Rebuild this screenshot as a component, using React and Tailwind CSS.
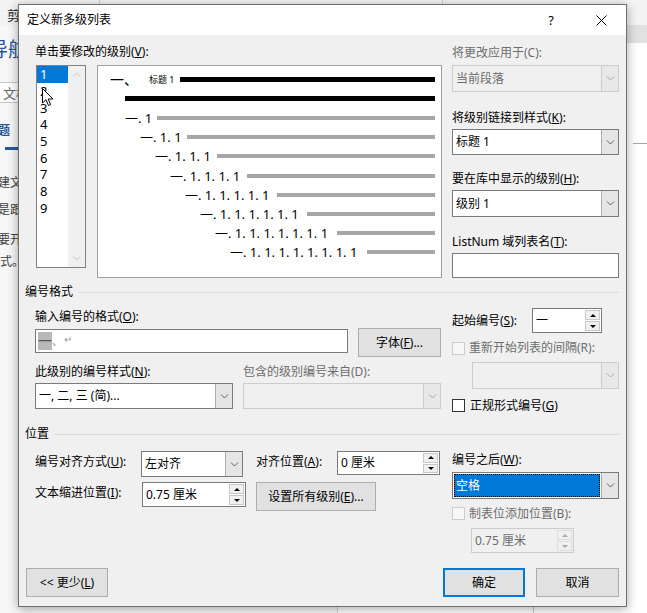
import React from "react";

const FONT = "font-['Noto_Sans','Noto_Sans_CJK_SC',sans-serif]";

function Chevron({ color = "#606060" }) {
  return (
    <svg width="9" height="5" viewBox="0 0 9 5">
      <path d="M1 0.5 L4.5 4 L8 0.5" fill="none" stroke={color} strokeWidth="1" />
    </svg>
  );
}

function Tri({ up, color = "#000" }) {
  return (
    <svg width="6" height="3" viewBox="0 0 6 3">
      <path d={up ? "M0 3 L3 0 L6 3 Z" : "M0 0 L3 3 L6 0 Z"} fill={color} />
    </svg>
  );
}

function Combo({ className = "", disabled = false, field = "pl-[3px]", children }) {
  return (
    <div
      className={`flex border ${
        disabled ? "border-[#cccccc] bg-[#f0f0f0] text-[#6d6d6d]" : "border-[#7a7a7a] bg-white"
      } ${className}`}
    >
      <div className={`flex-1 min-w-0 flex items-center whitespace-nowrap overflow-hidden ${field}`}>
        {children}
      </div>
      <div
        className={`w-[17px] flex items-center justify-center border-l ${
          disabled ? "border-[#cccccc] bg-[#e8e8e8]" : "border-[#adadad] bg-[#e5e5e5]"
        }`}
      >
        <Chevron color={disabled ? "#a8a8a8" : "#606060"} />
      </div>
    </div>
  );
}

function Spin({ className = "", disabled = false, children }) {
  return (
    <div
      className={`flex border ${
        disabled ? "border-[#cccccc] bg-[#f0f0f0] text-[#6d6d6d]" : "border-[#7a7a7a] bg-white"
      } ${className}`}
    >
      <div className="flex-1 flex items-center pl-[3px] whitespace-nowrap">{children}</div>
      <div className="w-[17px] flex flex-col p-[1px] gap-[1px]">
        <div
          className={`flex-1 flex items-center justify-center border ${
            disabled ? "border-[#dddddd] bg-[#f0f0f0]" : "border-[#c8c8c8] bg-[#f0f0f0]"
          }`}
        >
          <Tri up color={disabled ? "#a8a8a8" : "#000"} />
        </div>
        <div
          className={`flex-1 flex items-center justify-center border ${
            disabled ? "border-[#dddddd] bg-[#f0f0f0]" : "border-[#c8c8c8] bg-[#f0f0f0]"
          }`}
        >
          <Tri color={disabled ? "#a8a8a8" : "#000"} />
        </div>
      </div>
    </div>
  );
}

function Btn({ className = "", primary = false, children }) {
  return (
    <div
      className={`flex items-center justify-center bg-[#e1e1e1] border ${
        primary ? "border-[#0078d7] shadow-[inset_0_0_0_1px_#0078d7]" : "border-[#adadad]"
      } ${className}`}
    >
      {children}
    </div>
  );
}

function Check({ disabled = false }) {
  return (
    <div
      className={`w-[13px] h-[13px] shrink-0 border ${
        disabled ? "border-[#cccccc] bg-[#f7f7f7]" : "border-[#333333] bg-white"
      }`}
    />
  );
}

function SectionHeader({ className = "", children }) {
  return (
    <div className={`flex items-center ${className}`}>
      <span>{children}</span>
      <div className="flex-1 h-px ml-[6px] bg-[#dcdcdc]" />
    </div>
  );
}

const previewRows = [
  { pad: "ml-[27px]", box: "w-[32px]", text: "一. 1" },
  { pad: "ml-[42px]", box: "w-[47px]", text: "一. 1. 1" },
  { pad: "ml-[57px]", box: "w-[62px]", text: "一. 1. 1. 1" },
  { pad: "ml-[72px]", box: "w-[77px]", text: "一. 1. 1. 1. 1" },
  { pad: "ml-[87px]", box: "w-[92px]", text: "一. 1. 1. 1. 1. 1" },
  { pad: "ml-[102px]", box: "w-[107px]", text: "一. 1. 1. 1. 1. 1. 1" },
  { pad: "ml-[117px]", box: "w-[122px]", text: "一. 1. 1. 1. 1. 1. 1. 1" },
  { pad: "ml-[132px]", box: "w-[137px]", text: "一. 1. 1. 1. 1. 1. 1. 1. 1" },
];

const levels = ["1", "2", "3", "4", "5", "6", "7", "8", "9"];

function WordBackdrop() {
  return (
    <div className="flex flex-col h-full">
      <div className="h-[25px] shrink-0 flex items-start bg-[#f3f3f3]">
        <span className="ml-[7px] mt-[7px] text-[13px] text-[#262626]">剪</span>
        <div className="ml-[79px] w-px h-[5px] bg-[#d0d0d0]" />
        <div className="ml-[342px] w-px h-[5px] bg-[#d0d0d0]" />
      </div>
      <div className="flex flex-1 min-h-0">
        <div className="w-[338px] shrink-0 flex flex-col bg-[#f7f7f7] border-r border-[#d4d4d4] overflow-hidden">
          <div className="ml-[-12px] mt-[13px] text-[20px] leading-[24px] text-[#2b579a]">导航</div>
          <div className="ml-[-20px] mr-[12px] mt-[20px] h-[21px] flex items-center pl-[22px] bg-white border border-[#c6c6c6] text-[13px] text-[#666666]">
            文档
          </div>
          <div className="ml-[-14px] mt-[20px] font-bold text-[#2b579a]">标题</div>
          <div className="ml-[5px] mt-[8px] w-[32px] h-[3px] bg-[#2b579a]" />
          <div className="ml-[-2px] mt-[25px] text-[#404040]">建文</div>
          <div className="ml-[-2px] mt-[11px] text-[#404040]">是跟</div>
          <div className="ml-[-2px] mt-[14px] text-[#404040]">要开</div>
          <div className="ml-[0px] mt-[6px] text-[#404040]">式。</div>
        </div>
        <div className="flex-1 flex flex-col bg-white">
          <div className="h-[18px] bg-[#e1e1e1]" />
          <div className="ml-[295px] mt-[100px] h-px bg-[#a6a6a6]" />
          <div className="mt-auto h-[7px] flex">
            <div className="ml-[195px] w-px bg-[#c8c8c8]" />
          </div>
        </div>
      </div>
    </div>
  );
}

function LevelList() {
  return (
    <div className="ml-[1px] w-[50px] h-[203px] flex border border-[#828282] bg-white">
      <div className="flex-1 flex flex-col">
        {levels.map((lv) => (
          <div
            key={lv}
            className={`h-[16.7px] flex items-center pl-[3px] text-[13px] ${
              lv === "1" ? "bg-[#0078d7] text-white" : "text-black"
            }`}
          >
            {lv}
          </div>
        ))}
      </div>
      <div className="w-[17px] flex flex-col justify-between bg-[#f0f0f0]">
        <div className="h-[17px] flex items-center justify-center">
          <svg width="9" height="5" viewBox="0 0 9 5">
            <path d="M1 4.5 L4.5 1 L8 4.5" fill="none" stroke="#c2c2c2" strokeWidth="1" />
          </svg>
        </div>
        <div className="h-[17px] flex items-center justify-center">
          <Chevron color="#c2c2c2" />
        </div>
      </div>
    </div>
  );
}

function Preview() {
  return (
    <div className="ml-[11px] w-[345px] h-[213px] flex flex-col pt-[4px] border border-[#a0a0a0] bg-white">
      <div className="h-[19.2px] flex items-center">
        <span className="ml-[12px] w-[39px] text-[14px]">一、</span>
        <span className="w-[31px] text-[9px] whitespace-nowrap">标题 1</span>
        <div className="flex-1 h-[5px] mr-[6px] bg-black" />
      </div>
      <div className="h-[19.2px] flex items-center">
        <div className="flex-1 h-[5px] ml-[27px] mr-[6px] bg-black" />
      </div>
      {previewRows.map((row) => (
        <div key={row.text} className="h-[19.2px] flex items-center">
          <span className={`${row.pad} ${row.box} text-[13px] whitespace-pre`}>{row.text}</span>
          <div className="flex-1 h-[4px] mr-[6px] bg-[#a6a6a6]" />
        </div>
      ))}
    </div>
  );
}

function Dialog() {
  return (
    <div className="absolute left-[18px] top-[4px] w-[609px] h-[603px] flex flex-col border border-[#707070] bg-[#f0f0f0] shadow-[0_2px_10px_rgba(0,0,0,0.35)]">
      {/* 标题栏 */}
      <div className="h-[30px] shrink-0 flex items-center bg-white">
        <span className="ml-[8px]">定义新多级列表</span>
        <div className="ml-auto w-[50px] h-full flex items-center justify-center text-[13px]">?</div>
        <div className="w-[50px] h-full flex items-center justify-center">
          <svg width="11" height="11" viewBox="0 0 11 11">
            <path d="M0.5 0.5 L10.5 10.5 M10.5 0.5 L0.5 10.5" stroke="#000" strokeWidth="1" />
          </svg>
        </div>
      </div>

      <div className="flex-1 flex flex-col pl-[6px] pr-[7px]">
        {/* 级别 + 预览 */}
        <div className="flex pl-[10px] pt-[9px]">
          <div className="w-[407px] flex flex-col">
            <div>
              单击要修改的级别(<u>V</u>):
            </div>
            <div className="flex items-start mt-[5px]">
              <LevelList />
              <Preview />
            </div>
          </div>
          <div className="w-[167px] ml-[10px] flex flex-col">
            <div className="mt-[1px] text-[#6d6d6d]">将更改应用于(C):</div>
            <Combo disabled className="mt-[4px] h-[27px]">当前段落</Combo>
            <div className="mt-[18px]">
              将级别链接到样式(<u>K</u>):
            </div>
            <Combo className="mt-[3px] h-[26px]">标题 1</Combo>
            <div className="mt-[16px]">
              要在库中显示的级别(<u>H</u>):
            </div>
            <Combo className="mt-[3px] h-[27px]">级别 1</Combo>
            <div className="mt-[17px]">
              ListNum 域列表名(<u>T</u>):
            </div>
            <div className="mt-[3px] h-[25px] border border-[#7a7a7a] bg-white" />
          </div>
        </div>

        {/* 编号格式 */}
        <SectionHeader className="mt-[6px]">编号格式</SectionHeader>
        <div className="flex pl-[10px]">
          <div className="w-[406px] flex flex-col">
            <div className="mt-[9px]">
              输入编号的格式(<u>O</u>):
            </div>
            <div className="flex items-start mt-[3px]">
              <div className="mt-[1px] w-[313px] h-[24px] flex items-center pl-[2px] border border-[#7a7a7a] bg-white">
                <span className="w-[14px] h-[18px] leading-[18px] text-[14px] text-center bg-[#b9b9b9] text-[#555555]">
                  一
                </span>
                <span className="text-[11px] text-[#888888]">、</span>
                <span className="ml-[1px] mb-[4px] text-[10px] text-[#999999]">↵</span>
              </div>
              <Btn className="ml-[10px] w-[83px] h-[29px]">
                字体(<u>F</u>)...
              </Btn>
            </div>
            <div className="mt-[7px] flex">
              <div className="w-[208px]">
                此级别的编号样式(<u>N</u>):
              </div>
              <div className="text-[#6d6d6d]">包含的级别编号来自(D):</div>
            </div>
            <div className="flex mt-[3px]">
              <Combo className="w-[198px] h-[26px]">一, 二, 三 (简)...</Combo>
              <Combo disabled className="ml-[10px] w-[198px] h-[26px]" />
            </div>
          </div>
          <div className="w-[167px] ml-[11px] flex flex-col">
            <div className="mt-[8px] h-[25px] flex items-center">
              <div className="w-[80px]">
                起始编号(<u>S</u>):
              </div>
              <Spin className="w-[70px] h-[25px]">一</Spin>
            </div>
            <div className="mt-[8px] h-[14px] flex items-center">
              <Check disabled />
              <span className="ml-[4px] text-[#6d6d6d] whitespace-nowrap">重新开始列表的间隔(R):</span>
            </div>
            <Combo disabled className="ml-[20px] mt-[7px] h-[27px]" />
            <div className="mt-[10px] h-[13px] flex items-center">
              <Check />
              <span className="ml-[5px] whitespace-nowrap">
                正规形式编号(<u>G</u>)
              </span>
            </div>
          </div>
        </div>

        {/* 位置 */}
        <SectionHeader className="mt-[14px]">位置</SectionHeader>
        <div className="flex pl-[10px]">
          <div className="w-[406px] flex flex-col">
            <div className="flex items-start mt-[9px]">
              <div className="w-[106px] pt-[3px]">
                编号对齐方式(<u>U</u>):
              </div>
              <Combo className="w-[102px] h-[26px]">左对齐</Combo>
              <div className="ml-[13px] w-[81px] pt-[3px]">
                对齐位置(<u>A</u>):
              </div>
              <Spin className="w-[103px] h-[24px]">0 厘米</Spin>
            </div>
            <div className="flex items-start mt-[5px]">
              <div className="w-[107px] pt-[3px]">
                文本缩进位置(<u>I</u>):
              </div>
              <Spin className="w-[104px] h-[25px]">0.75 厘米</Spin>
              <Btn className="ml-[10px] w-[120px] h-[29px]">
                设置所有级别(<u>E</u>)...
              </Btn>
            </div>
          </div>
          <div className="w-[167px] ml-[11px] flex flex-col">
            <div className="mt-[10px]">
              编号之后(<u>W</u>):
            </div>
            <Combo className="mt-[4px] h-[27px]" field="p-[1px]">
              <div className="w-full h-full flex items-center pl-[1px] bg-[#0078d7] text-white border border-dotted border-black">
                空格
              </div>
            </Combo>
            <div className="mt-[8px] h-[13px] flex items-center">
              <Check disabled />
              <span className="ml-[4px] text-[#6d6d6d] whitespace-nowrap">制表位添加位置(B):</span>
            </div>
            <Spin disabled className="ml-[19px] mt-[8px] w-[103px] h-[25px]">
              0.75 厘米
            </Spin>
          </div>
        </div>

        {/* 底部按钮 */}
        <div className="mt-auto pb-[9px] flex">
          <Btn className="ml-[1px] w-[82px] h-[29px]">
            {"<< "}更少(<u>L</u>)
          </Btn>
          <Btn primary className="ml-auto w-[82px] h-[29px]">
            确定
          </Btn>
          <Btn className="ml-[11px] w-[83px] h-[29px]">取消</Btn>
        </div>
      </div>
    </div>
  );
}

export default function App() {
  return (
    <div
      className={`relative w-[647px] h-[613px] overflow-hidden bg-[#f0f0f0] text-[12px] leading-[16px] text-black ${FONT}`}
    >
      <WordBackdrop />
      <Dialog />
      {/* 鼠标指针 */}
      <svg className="absolute left-[42px] top-[88px]" width="12" height="19" viewBox="0 0 12 19">
        <path
          d="M0.5 0.5 L0.5 15 L4 11.7 L6.5 17.5 L8.6 16.6 L6.2 11 L11 11 Z"
          fill="#fff"
          stroke="#000"
          strokeWidth="1"
        />
      </svg>
    </div>
  );
}
